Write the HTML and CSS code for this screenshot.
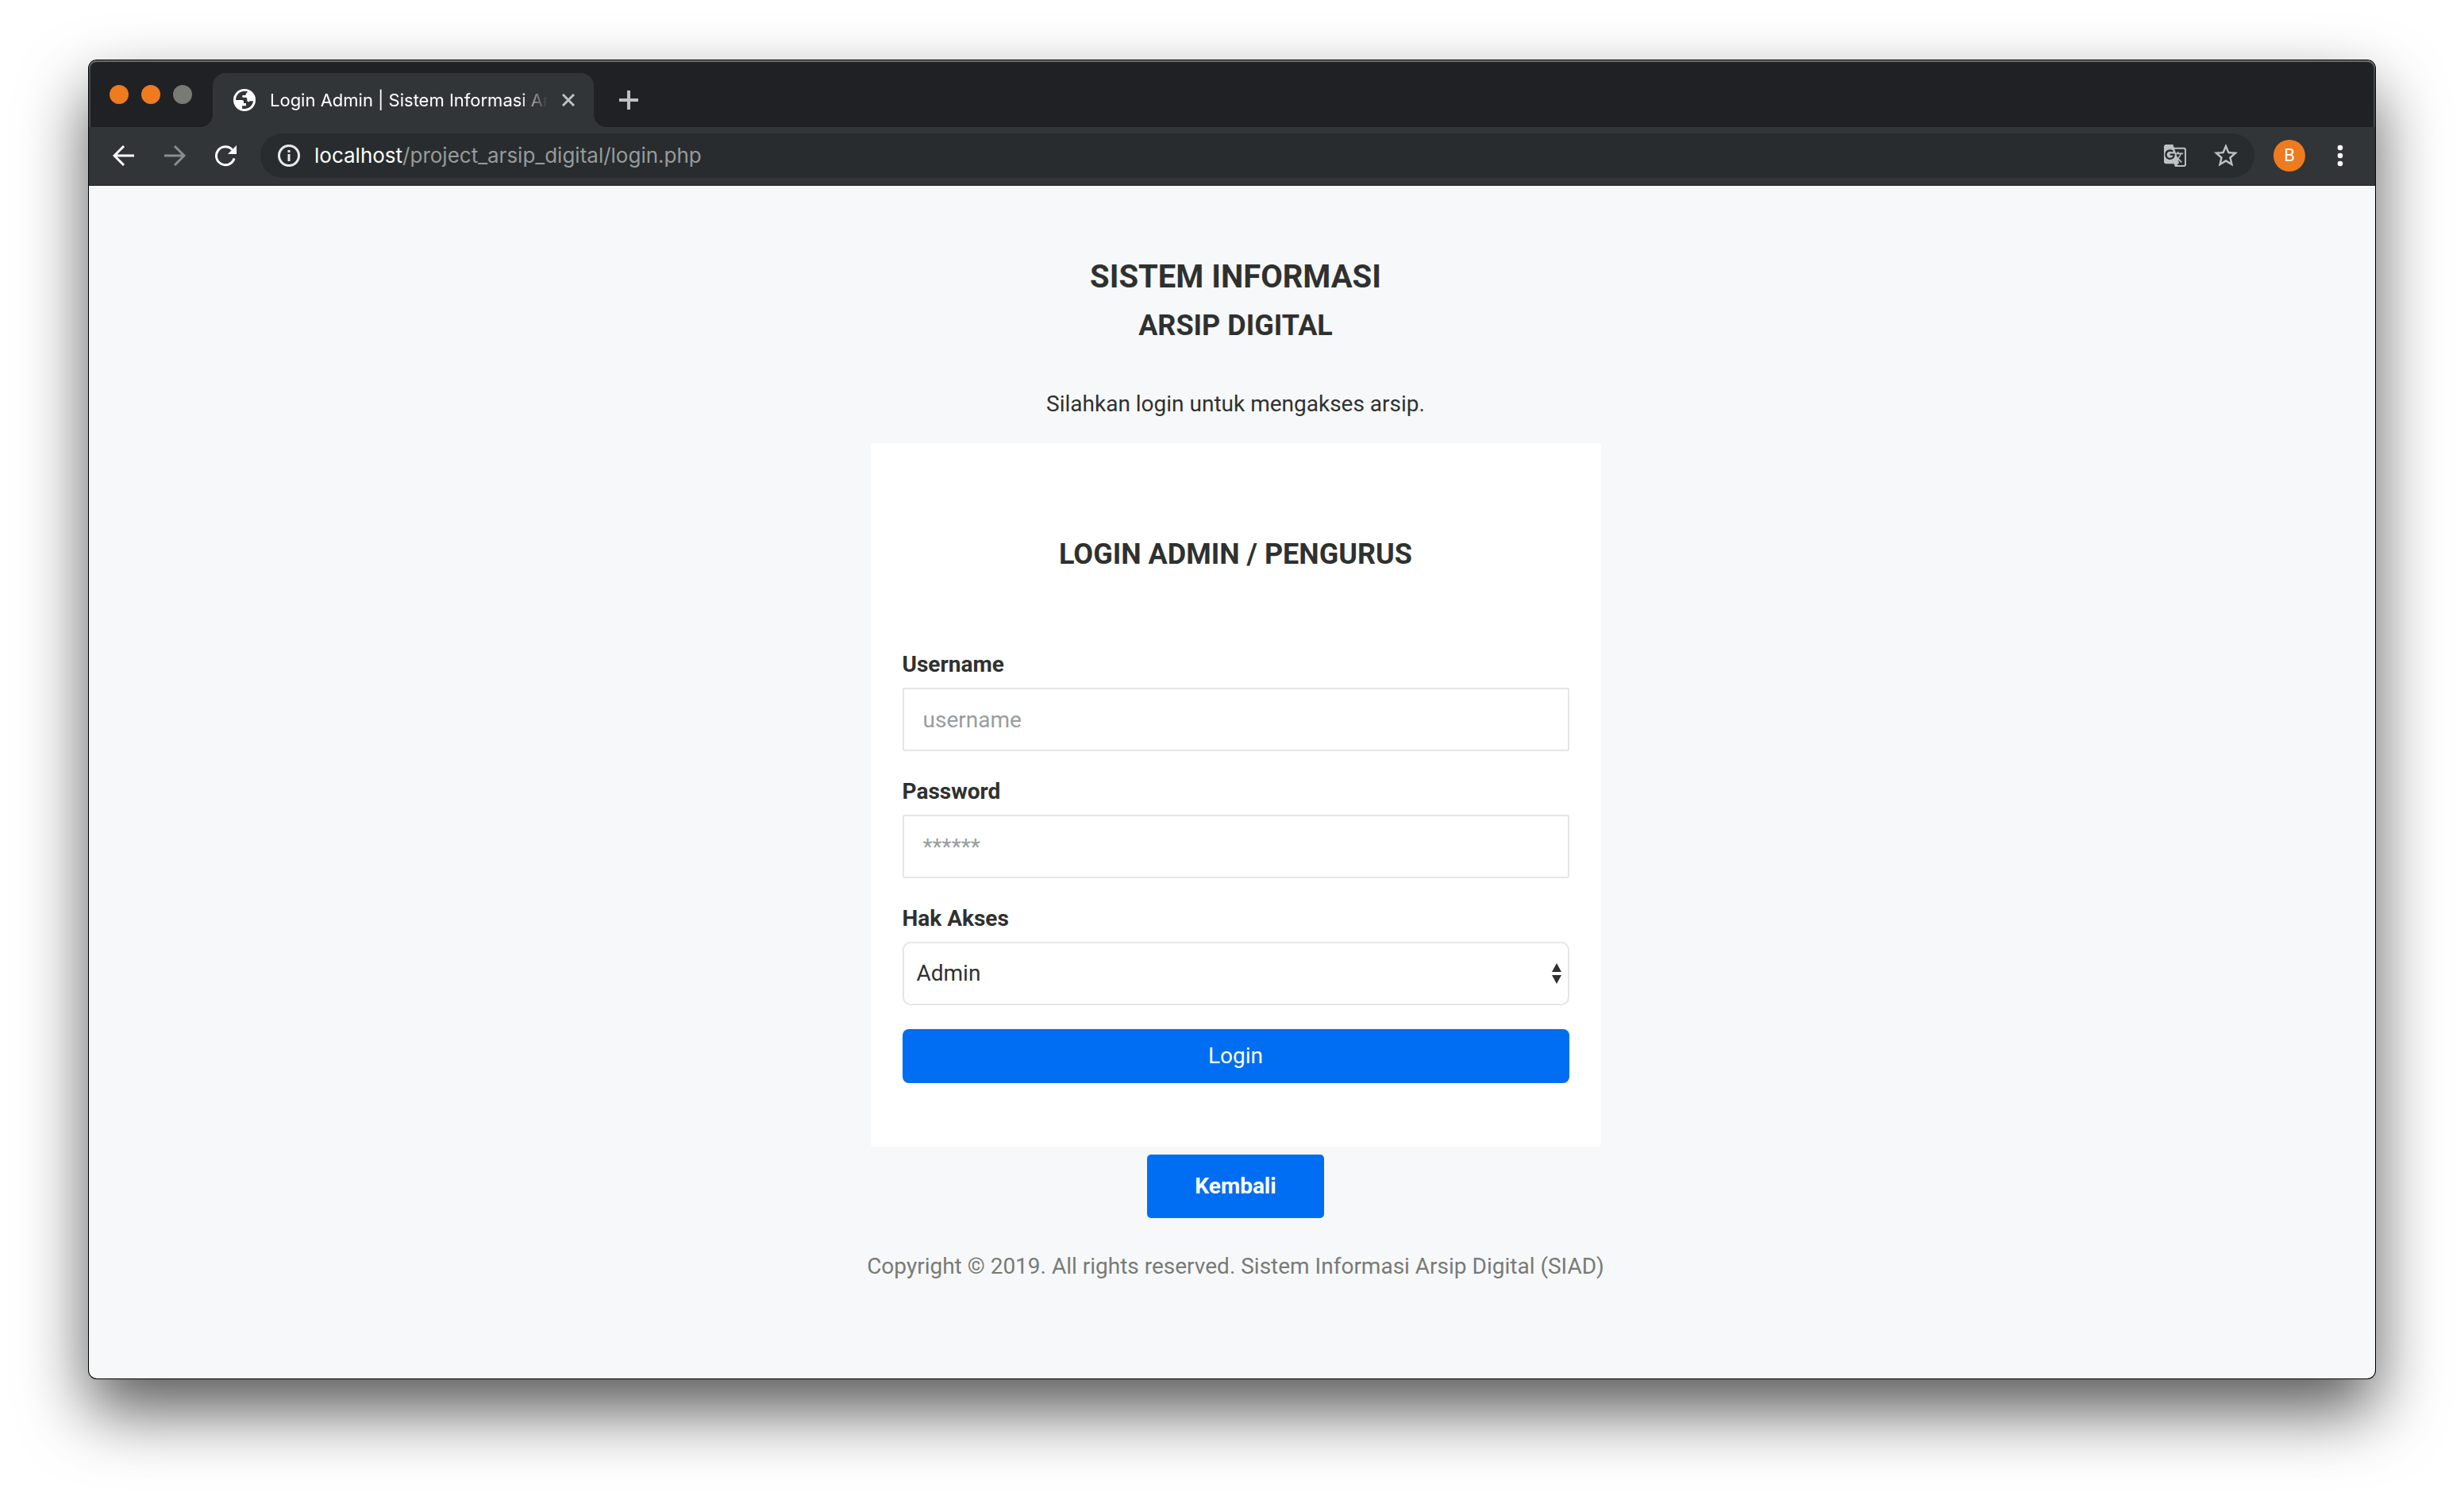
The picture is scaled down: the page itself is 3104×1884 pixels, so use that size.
FILE: index.html
```html
<!DOCTYPE html>
<html lang="id">
<head>
  <meta charset="utf-8">
  <meta name="viewport" content="width=device-width, initial-scale=1">
  <title>Login Admin | Sistem Informasi Arsip Digital</title>
  <link rel="stylesheet" href="styles.css">
</head>
<body>
  <div class="window">
    <header class="titlebar">
      <div class="lights">
        <button class="light" type="button" aria-label="Close window"></button>
        <button class="light" type="button" aria-label="Minimize window"></button>
        <button class="light light-off" type="button" aria-label="Zoom window"></button>
      </div>
      <div class="tab">
        <svg class="tab-icon" viewBox="0 0 84 84" aria-hidden="true">
          <circle cx="42" cy="42" r="42" fill="#fff"/>
          <path fill="#323538" d="M54 10C30 4 10 18 9 42h24q6 0 6 6v6h9v10H36q-3 0-3 4v6C52 79 72 68 75 46H62q-4 6-10 0v-8q0-6-6-6H34v-8h9q5 0 5-6z"/>
        </svg>
        <span class="tab-title">Login Admin | Sistem Informasi Arsip Digital</span>
        <button class="tab-close" type="button" aria-label="Close tab">
          <svg viewBox="0 0 16 16" aria-hidden="true"><path d="M1 1l14 14M15 1L1 15" stroke="#bdc1c6" stroke-width="3"/></svg>
        </button>
      </div>
      <button class="new-tab" type="button" aria-label="New tab">
        <svg viewBox="0 0 24 24" aria-hidden="true"><path d="M12 0v24M0 12h24" stroke="#bdc1c6" stroke-width="4"/></svg>
      </button>
    </header>

    <nav class="toolbar" aria-label="Browser">
      <button class="nav-btn" type="button" aria-label="Back">
        <svg viewBox="0 0 28 28" aria-hidden="true"><path d="M27 14H3M14 2L2 14l12 12" fill="none" stroke="#fff" stroke-width="3"/></svg>
      </button>
      <button class="nav-btn" type="button" aria-label="Forward">
        <svg viewBox="0 0 28 28" aria-hidden="true"><path d="M1 14h24M14 2l12 12-12 12" fill="none" stroke="#8b8e8f" stroke-width="3"/></svg>
      </button>
      <button class="nav-btn" type="button" aria-label="Reload">
        <svg viewBox="0 0 28 28" aria-hidden="true"><path d="M25 17.500A11.500 11.500 0 1 1 22.500 6.500" fill="none" stroke="#fff" stroke-width="3"/><path d="M28 1v11H17z" fill="#fff"/></svg>
      </button>
      <div class="omnibox">
        <svg class="omni-icon" viewBox="0 0 28 28" aria-hidden="true">
          <circle cx="14" cy="14" r="12.500" fill="none" stroke="#e8eaed" stroke-width="3"/>
          <path d="M12.500 7h3v3h-3zM12.500 12h3v9h-3z" fill="#e8eaed"/>
        </svg>
        <div class="url"><span class="host">localhost</span>/project_arsip_digital/login.php</div>
        <button class="omni-btn" type="button" aria-label="Translate this page">
          <svg class="translate" viewBox="1 1 22 22" aria-hidden="true"><path fill="#bdc1c6" fill-rule="evenodd" d="M21 4H11l-1-3H3c-1.100 0-2 .9-2 2v15c0 1.100.9 2 2 2h8l1 3h9c1.100 0 2-.9 2-2V6c0-1.100-.9-2-2-2zM7 16c-2.760 0-5-2.240-5-5s2.240-5 5-5c1.350 0 2.480.5 3.350 1.300L9.030 8.570c-.38-.36-1.040-.78-2.030-.78-1.740 0-3.150 1.440-3.150 3.210S5.260 14.210 7 14.210c2.010 0 2.840-1.440 2.920-2.410H7v-1.710h4.680c.07.31.12.61.12 1.020C11.800 13.970 9.890 16 7 16zm6.170-5.420h3.700c-.43 1.250-1.110 2.430-2.050 3.470-.31-.35-.6-.72-.86-1.100l-.79-2.370zm8.330 9.920c0 .55-.45 1-1 1H14l2-2.500-1.040-3.100 3.100 3.100.92-.92-3.300-3.250.02-.02c1.130-1.250 1.930-2.690 2.400-4.220H20v-1.300h-4.530V8h-1.290v1.290h-1.440L11.460 5.500h9.040c.55 0 1 .45 1 1v14z"/></svg>
        </button>
        <button class="omni-btn" type="button" aria-label="Bookmark this page">
          <svg class="star" viewBox="0 0 24 24" aria-hidden="true"><path fill="#bdc1c6" d="M22 9.240l-7.190-.62L12 2 9.190 8.630 2 9.240l5.460 4.730L5.820 21 12 17.270 18.180 21l-1.630-7.030L22 9.240zM12 15.400l-3.760 2.270 1-4.280-3.320-2.880 4.380-.38L12 6.100l1.710 4.040 4.380.38-3.320 2.880 1 4.280L12 15.400z"/></svg>
        </button>
      </div>
      <button class="avatar" type="button" aria-label="Profile">B</button>
      <button class="menu-btn" type="button" aria-label="Menu">
        <svg viewBox="0 0 8 28" aria-hidden="true"><g fill="#fff"><circle cx="4" cy="4" r="3.300"/><circle cx="4" cy="14" r="3.300"/><circle cx="4" cy="24" r="3.300"/></g></svg>
      </button>
    </nav>

    <main class="page">
      <h1 class="brand">SISTEM INFORMASI</h1>
      <h2 class="brand-sub">ARSIP DIGITAL</h2>
      <p class="intro">Silahkan login untuk mengakses arsip.</p>

      <form class="card">
        <h2 class="card-title">LOGIN ADMIN / PENGURUS</h2>
        <div class="field">
          <label for="username">Username</label>
          <input class="control" id="username" type="text" placeholder="username">
        </div>
        <div class="field">
          <label for="password">Password</label>
          <input class="control" id="password" type="password" placeholder="******">
        </div>
        <div class="field">
          <label for="akses">Hak Akses</label>
          <div class="select-wrap">
            <select class="control select" id="akses">
              <option>Admin</option>
              <option>Pengurus</option>
            </select>
            <svg class="select-arrows" viewBox="0 0 14 26" aria-hidden="true"><path fill="#2f3130" d="M7 0l6 11H1zM7 26l6-11H1z"/></svg>
          </div>
        </div>
        <button class="login-btn" type="submit">Login</button>
      </form>

      <a class="back-btn" href="index.php">Kembali</a>
      <footer class="copyright">Copyright © 2019. All rights reserved. Sistem Informasi Arsip Digital (SIAD)</footer>
    </main>
  </div>
</body>
</html>
```
FILE: styles.css
```css
*,
*::before,
*::after {
  box-sizing: border-box;
}

body {
  margin: 0;
  min-height: 100vh;
  padding: 76px 112px 148px;
  display: flex;
  flex-direction: column;
  background: #fff;
  color: #2f3130;
  font: 28px/42px Roboto, sans-serif;
}

button {
  margin: 0;
  padding: 0;
  border: 0;
  background: none;
  font: inherit;
  cursor: pointer;
}

svg {
  display: block;
}

h1,
h2,
p {
  margin: 0;
}

.window {
  flex: 1;
  display: flex;
  flex-direction: column;
  border-radius: 10px;
  background: #f7f8fa;
  box-shadow: 0 0 0 1px #000, 0 40px 84px rgba(0, 0, 0, 0.66);
}

/* Title bar and tab strip */
.titlebar {
  display: flex;
  align-items: flex-end;
  height: 84px;
  border-radius: 10px 10px 0 0;
  background: #202124;
  box-shadow: inset 0 2px 0 #6c706b, inset 2px 0 0 #46484a, inset -2px 0 0 #46484a;
  font-family: Inter, sans-serif;
}

.lights {
  display: flex;
  gap: 16px;
  padding: 0 26px 29px;
}

.light {
  width: 24px;
  height: 24px;
  border-radius: 50%;
  background: #ee7b20;
}

.light-off {
  background: #777b74;
}

.tab {
  position: relative;
  display: flex;
  align-items: center;
  width: 480px;
  height: 68px;
  padding: 0 24px 0 26px;
  border-radius: 16px 16px 0 0;
  background: #323538;
}

.tab::before,
.tab::after {
  content: "";
  position: absolute;
  bottom: 0;
  width: 16px;
  height: 16px;
}

.tab::before {
  right: 100%;
  background: radial-gradient(circle at 0 0, transparent 16px, #323538 16px);
}

.tab::after {
  left: 100%;
  background: radial-gradient(circle at 100% 0, transparent 16px, #323538 16px);
}

.tab-icon {
  flex: none;
  width: 28px;
  height: 28px;
}

.tab-title {
  flex: 1;
  min-width: 0;
  margin: 0 18px;
  overflow: hidden;
  white-space: nowrap;
  color: #fff;
  font-size: 22px;
  line-height: 32px;
  mask-image: linear-gradient(to right, #000 calc(100% - 36px), transparent);
}

.tab-close svg {
  width: 16px;
  height: 16px;
}

.new-tab {
  padding: 22px 32px;
}

.new-tab svg {
  width: 24px;
  height: 24px;
}

/* Navigation toolbar */
.toolbar {
  display: flex;
  align-items: center;
  height: 74px;
  padding: 0 40px 1px 30px;
  border-bottom: 1px solid #202124;
  background: #323538;
}

.nav-btn {
  margin-right: 36px;
}

.nav-btn svg {
  width: 28px;
  height: 28px;
}

.nav-btn:nth-child(3) {
  margin-right: 30px;
}

.omnibox {
  flex: 1;
  min-width: 0;
  display: flex;
  align-items: center;
  height: 56px;
  padding: 0 18px 0 22px;
  border-radius: 28px;
  background: #282c2e;
}

.omni-icon {
  flex: none;
  width: 28px;
  height: 28px;
}

.url {
  flex: 1;
  min-width: 0;
  margin-left: 18px;
  overflow: hidden;
  white-space: nowrap;
  color: #979b9b;
  font: 26px/40px Inter, sans-serif;
}

.host {
  color: #fff;
}

.translate {
  width: 28px;
  height: 28px;
}

.star {
  width: 36px;
  height: 36px;
}

.omni-btn + .omni-btn {
  margin-left: 32px;
}

.avatar {
  width: 40px;
  height: 40px;
  margin: 0 40px 0 24px;
  border-radius: 50%;
  background: #ee7b20;
  color: #fff;
  font: 22px/40px Roboto, sans-serif;
}

.menu-btn svg {
  width: 8px;
  height: 28px;
}

/* Login page */
.page {
  flex: 1;
  display: flex;
  flex-direction: column;
  align-items: center;
  padding: 91px 0 120px 9px;
  text-align: center;
}

.brand {
  margin-bottom: 15px;
  font-size: 40px;
  line-height: 48px;
}

.brand-sub,
.card-title {
  font-size: 36px;
  line-height: 44px;
}

.brand-sub {
  margin-bottom: 56px;
}

.intro {
  margin-bottom: 28px;
}

.card {
  width: 100%;
  max-width: 920px;
  padding: 118px 40px 80px;
  border-radius: 4px;
  background: #fff;
  text-align: left;
}

.card-title {
  margin-bottom: 96px;
  text-align: center;
}

.field {
  margin-bottom: 30px;
}

.field label {
  display: block;
  margin-bottom: 8px;
  font-weight: 700;
}

.control {
  display: block;
  width: 100%;
  height: 80px;
  padding: 0 24px;
  border: 2px solid #e6e6e6;
  border-radius: 2px;
  background: #fff;
  color: #2f3130;
  font: inherit;
}

.control::placeholder {
  color: #999c9e;
  opacity: 1;
}

.select-wrap {
  position: relative;
}

.select {
  padding: 0 16px;
  border-radius: 10px;
  appearance: none;
}

.select-arrows {
  position: absolute;
  top: 27px;
  right: 9px;
  width: 14px;
  height: 26px;
  pointer-events: none;
}

.login-btn,
.back-btn {
  background: #006ef2;
  color: #fff;
}

.login-btn {
  display: block;
  width: 100%;
  height: 68px;
  border-radius: 8px;
}

.back-btn {
  margin: 10px 0 40px;
  padding: 19px 60px;
  border-radius: 5px;
  font-weight: 700;
  text-decoration: none;
}

.copyright {
  color: #777b76;
}
```
